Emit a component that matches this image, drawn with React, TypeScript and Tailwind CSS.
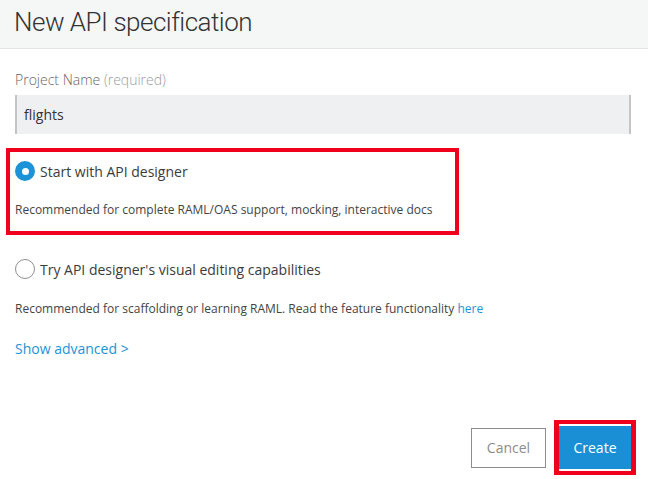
import React from "react";

const body = { fontFamily: '"Open Sans", "Liberation Sans", sans-serif' };
const title = { fontFamily: 'Roboto, "Liberation Sans", sans-serif' };

function Radio({ checked }: { checked?: boolean }) {
  if (checked) {
    return (
      <span className="flex h-[20px] w-[20px] shrink-0 items-center justify-center rounded-full bg-[#1d93d7]">
        <span className="h-[7px] w-[7px] rounded-full bg-white" />
      </span>
    );
  }
  return <span className="h-[20px] w-[20px] shrink-0 rounded-full border border-[#8f8f8f] bg-white" />;
}

export default function App() {
  return (
    <div className="h-[479px] w-[648px] overflow-hidden bg-white" style={body}>
      {/* header */}
      <div className="flex h-[49px] items-center border-b border-[#e3e5e5] bg-[#f5f6f6] pb-[4px] pl-[14px]">
        <h1 className="text-[26px] font-light leading-none tracking-[-0.5px] text-[#333]" style={title}>
          New API specification
        </h1>
      </div>

      <div className="flex flex-col pl-[15px] pr-[17px]">
        <label className="mt-[23px] text-[14px] font-light leading-[16px] text-[#666]">
          Project Name <span className="text-[#9c9c9c]">(required)</span>
        </label>
        <div className="mt-[7px] flex h-[39px] items-center border-x-2 border-[#c4c4c4] bg-[#eff0f1] pl-[7px] text-[14px] text-[#333]">
          flights
        </div>

        {/* option 1 (highlighted) */}
        <div className="-ml-[9px] mt-[14px] w-[453px] border-4 border-[#f0001c] pb-[12px] pl-[5px] pt-[9px]">
          <div className="flex h-[20px] items-center gap-[5px]">
            <Radio checked />
            <span className="text-[14px] text-[#3b3b3b]">Start with API designer</span>
          </div>
          <p className="mt-[20px] text-[12px] leading-[18px] text-[#444]">
            Recommended for complete RAML/OAS support, mocking, interactive docs
          </p>
        </div>

        {/* option 2 */}
        <div className="mt-[24px] flex h-[20px] items-center gap-[5px]">
          <Radio />
          <span className="text-[14px] text-[#3b3b3b]">Try API designer's visual editing capabilities</span>
        </div>
        <p className="mt-[21px] text-[12px] leading-[18px] text-[#444]">
          Recommended for scaffolding or learning RAML. Read the feature functionality{" "}
          <a className="text-[#1d93d7]">here</a>
        </p>

        <a className="mt-[21px] text-[14px] leading-[20px] text-[#1d93d7]">Show advanced &gt;</a>

        {/* footer buttons */}
        <div className="-mr-[5px] mt-[61px] flex items-center justify-end gap-[8px]">
          <button className="h-[40px] w-[75px] border border-[#8c8c8c] bg-white text-[14px] text-[#8c8c8c]">
            Cancel
          </button>
          <div className="border-4 border-x-[5px] border-[#f0001c] py-[2px]">
            <button className="h-[43px] w-[72px] bg-[#1b8fd6] text-[14px] text-white">Create</button>
          </div>
        </div>
      </div>
    </div>
  );
}
